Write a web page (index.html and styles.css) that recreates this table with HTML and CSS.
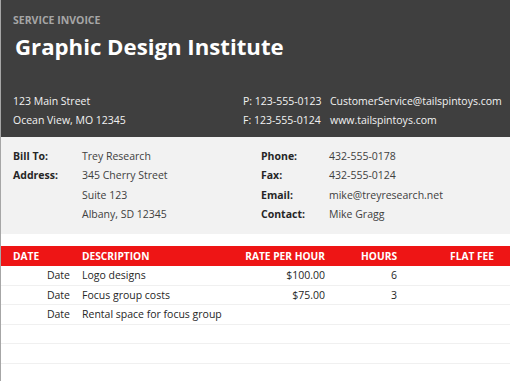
FILE: index.html
```html
<!DOCTYPE html>
<html>
<head>
<meta charset="utf-8">
<link rel="stylesheet" href="styles.css">
</head>
<body>
<div class="page">
  <header class="top">
    <div class="kicker">SERVICE INVOICE</div>
    <h1 class="title">Graphic Design Institute</h1>
    <div class="contact">
      <div>123 Main Street</div><div>P: 123-555-0123</div><div>CustomerService@tailspintoys.com</div>
      <div>Ocean View, MO 12345</div><div>F: 123-555-0124</div><div>www.tailspintoys.com</div>
    </div>
  </header>
  <section class="bill">
    <div class="lbl">Bill To:</div><div class="val">Trey Research</div><div class="lbl">Phone:</div><div class="val">432-555-0178</div>
    <div class="lbl">Address:</div><div class="val">345 Cherry Street</div><div class="lbl">Fax:</div><div class="val">432-555-0124</div>
    <div class="lbl"></div><div class="val">Suite 123</div><div class="lbl">Email:</div><div class="val">mike@treyresearch.net</div>
    <div class="lbl"></div><div class="val">Albany, SD 12345</div><div class="lbl">Contact:</div><div class="val">Mike Gragg</div>
  </section>
  <section class="table">
    <div class="row head">
      <div>DATE</div><div>DESCRIPTION</div><div class="r">RATE PER HOUR</div><div class="r">HOURS</div><div class="r">FLAT FEE</div>
    </div>
    <div class="row">
      <div class="r">Date</div><div>Logo designs</div><div class="r">$100.00</div><div class="r">6</div><div class="r"></div>
    </div>
    <div class="row">
      <div class="r">Date</div><div>Focus group costs</div><div class="r">$75.00</div><div class="r">3</div><div class="r"></div>
    </div>
    <div class="row">
      <div class="r">Date</div><div>Rental space for focus group</div><div class="r"></div><div class="r"></div><div class="r"></div>
    </div>
    <div class="row"><div></div><div></div><div></div><div></div><div></div></div>
    <div class="row"><div></div><div></div><div></div><div></div><div></div></div>
    <div class="row"><div></div><div></div><div></div><div></div><div></div></div>
  </section>
</div>
</body>
</html>
```

FILE: styles.css
```css
* { box-sizing: border-box; margin: 0; padding: 0; }
html, body { background: #ffffff; }
body {
  font-family: "Open Sans", "Noto Sans", sans-serif;
  font-size: 10.5px;
  color: #404040;
  width: 510px;
  height: 381px;
  overflow: hidden;
}
.page {
  border-left: 1px solid #a6a6a6;
  min-height: 381px;
}
.top {
  background: #3f3f3f;
  height: 137px;
  padding: 11px 0 0 12px;
}
.kicker {
  font-weight: 700;
  font-size: 10.5px;
  line-height: 18px;
  color: #a6a6a6;
}
.title {
  font-weight: 700;
  font-size: 22.2px;
  line-height: 36px;
  color: #ffffff;
  margin-left: 2px;
}
.contact {
  margin-top: 26px;
  display: grid;
  grid-template-columns: 230px 87px 1fr;
  grid-auto-rows: 19.5px;
  align-items: center;
  color: #f2f2f2;
}
.bill {
  background: #f2f2f2;
  height: 97px;
  padding: 9px 0 0 12px;
  display: grid;
  grid-template-columns: 69px 179px 68px 1fr;
  grid-auto-rows: 19.5px;
  align-items: center;
}
.lbl { font-weight: 700; color: #262626; }
.val { color: #404040; }
.table { margin-top: 12px; }
.row {
  display: grid;
  grid-template-columns: 57px 156px 75px 60px 85px;
  column-gap: 12px;
  padding: 0 15px 0 12px;
  height: 19.5px;
  align-items: center;
  border-bottom: 1px solid #f0f0f0;
  color: #262626;
  white-space: nowrap;
}
.row.head {
  background: #ee1515;
  color: #ffffff;
  font-weight: 700;
  font-size: 10.2px;
  height: 20px;
  border-bottom: none;
}
.r { text-align: right; justify-self: end; }
```
